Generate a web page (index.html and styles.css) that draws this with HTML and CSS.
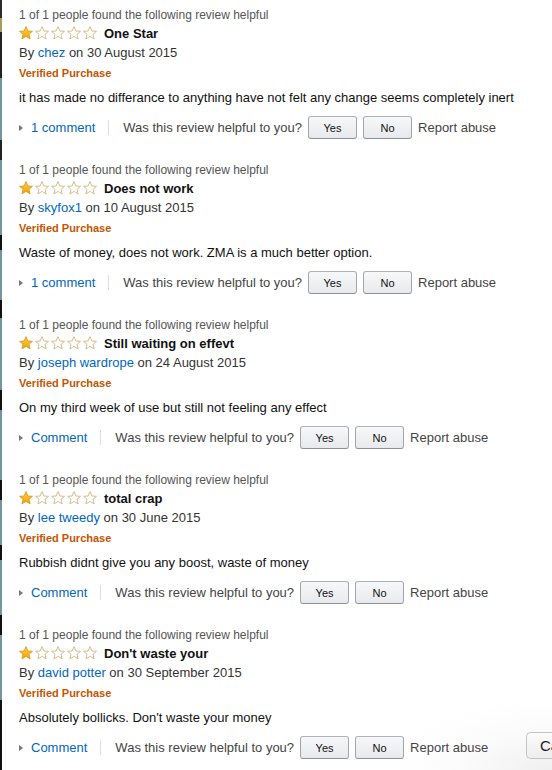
FILE: index.html
```html
<!DOCTYPE html>
<html>
<head>
<meta charset="utf-8">
<link rel="stylesheet" href="styles.css">
</head>
<body>
<div class="float-shade"></div>
<div class="page">
  <div class="edge"></div>
  <main class="reviews">

    <section class="review">
      <div class="helpful-count">1 of 1 people found the following review helpful</div>
      <div class="rating-row">
        <svg class="stars" width="79" height="14" viewBox="0 0 79 14">
          <defs>
            <linearGradient id="gold" x1="0" y1="0" x2="0" y2="1">
              <stop offset="0" stop-color="#ffce3d"/>
              <stop offset="1" stop-color="#f0a30a"/>
            </linearGradient>
            <path id="st" d="M7 0.6 L8.9 5 L13.5 5.3 L10 8.3 L11.1 12.9 L7 10.4 L2.9 12.9 L4 8.3 L0.5 5.3 L5.1 5 Z"/>
          </defs>
          <use href="#st" x="0" class="on"/>
          <use href="#st" x="16" class="off"/>
          <use href="#st" x="32" class="off"/>
          <use href="#st" x="48" class="off"/>
          <use href="#st" x="64" class="off"/>
        </svg>
        <span class="title">One Star</span>
      </div>
      <div class="byline">By <a class="link">chez</a> on 30 August 2015</div>
      <div class="verified">Verified Purchase</div>
      <p class="text">it has made no differance to anything have not felt any change seems completely inert</p>
      <div class="actions">
        <span class="toggle"></span><a class="link comments">1 comment</a><span class="sep"></span>
        <span class="ask">Was this review helpful to you?</span>
        <button class="btn">Yes</button><button class="btn">No</button>
        <span class="report">Report abuse</span>
      </div>
    </section>

    <section class="review">
      <div class="helpful-count">1 of 1 people found the following review helpful</div>
      <div class="rating-row">
        <svg class="stars" width="79" height="14" viewBox="0 0 79 14">
          <use href="#st" x="0" class="on"/>
          <use href="#st" x="16" class="off"/>
          <use href="#st" x="32" class="off"/>
          <use href="#st" x="48" class="off"/>
          <use href="#st" x="64" class="off"/>
        </svg>
        <span class="title">Does not work</span>
      </div>
      <div class="byline">By <a class="link">skyfox1</a> on 10 August 2015</div>
      <div class="verified">Verified Purchase</div>
      <p class="text">Waste of money, does not work. ZMA is a much better option.</p>
      <div class="actions">
        <span class="toggle"></span><a class="link comments">1 comment</a><span class="sep"></span>
        <span class="ask">Was this review helpful to you?</span>
        <button class="btn">Yes</button><button class="btn">No</button>
        <span class="report">Report abuse</span>
      </div>
    </section>

    <section class="review">
      <div class="helpful-count">1 of 1 people found the following review helpful</div>
      <div class="rating-row">
        <svg class="stars" width="79" height="14" viewBox="0 0 79 14">
          <use href="#st" x="0" class="on"/>
          <use href="#st" x="16" class="off"/>
          <use href="#st" x="32" class="off"/>
          <use href="#st" x="48" class="off"/>
          <use href="#st" x="64" class="off"/>
        </svg>
        <span class="title">Still waiting on effevt</span>
      </div>
      <div class="byline">By <a class="link">joseph wardrope</a> on 24 August 2015</div>
      <div class="verified">Verified Purchase</div>
      <p class="text">On my third week of use but still not feeling any effect</p>
      <div class="actions">
        <span class="toggle"></span><a class="link comments">Comment</a><span class="sep"></span>
        <span class="ask">Was this review helpful to you?</span>
        <button class="btn">Yes</button><button class="btn">No</button>
        <span class="report">Report abuse</span>
      </div>
    </section>

    <section class="review">
      <div class="helpful-count">1 of 1 people found the following review helpful</div>
      <div class="rating-row">
        <svg class="stars" width="79" height="14" viewBox="0 0 79 14">
          <use href="#st" x="0" class="on"/>
          <use href="#st" x="16" class="off"/>
          <use href="#st" x="32" class="off"/>
          <use href="#st" x="48" class="off"/>
          <use href="#st" x="64" class="off"/>
        </svg>
        <span class="title">total crap</span>
      </div>
      <div class="byline">By <a class="link">lee tweedy</a> on 30 June 2015</div>
      <div class="verified">Verified Purchase</div>
      <p class="text">Rubbish didnt give you any boost, waste of money</p>
      <div class="actions">
        <span class="toggle"></span><a class="link comments">Comment</a><span class="sep"></span>
        <span class="ask">Was this review helpful to you?</span>
        <button class="btn">Yes</button><button class="btn">No</button>
        <span class="report">Report abuse</span>
      </div>
    </section>

    <section class="review last">
      <div class="helpful-count">1 of 1 people found the following review helpful</div>
      <div class="rating-row">
        <svg class="stars" width="79" height="14" viewBox="0 0 79 14">
          <use href="#st" x="0" class="on"/>
          <use href="#st" x="16" class="off"/>
          <use href="#st" x="32" class="off"/>
          <use href="#st" x="48" class="off"/>
          <use href="#st" x="64" class="off"/>
        </svg>
        <span class="title">Don't waste your</span>
      </div>
      <div class="byline">By <a class="link">david potter</a> on 30 September 2015</div>
      <div class="verified">Verified Purchase</div>
      <p class="text">Absolutely bollicks. Don't waste your money</p>
      <div class="actions">
        <span class="toggle"></span><a class="link comments">Comment</a><span class="sep"></span>
        <span class="ask">Was this review helpful to you?</span>
        <button class="btn">Yes</button><button class="btn">No</button>
        <span class="report">Report abuse</span>
      </div>
    </section>

  </main>
</div>
<button class="float-btn">Ca</button>
</body>
</html>
```

FILE: styles.css
```css
html, body {
  margin: 0;
  padding: 0;
  height: 100%;
  overflow: hidden;
  background: #fff;
}
body {
  font-family: "Liberation Sans", Arial, sans-serif;
  color: #111;
  position: relative;
}
.page {
  display: flex;
  height: 100%;
  position: relative;
  z-index: 1;
}
.edge {
  width: 2px;
  flex: none;
  background: linear-gradient(to bottom,
    #2a2a2a 0, #2a2a2a 18px, #a89a5a 18px, #a89a5a 32px, #222 32px, #222 78px,
    #6f95a5 78px, #6f95a5 140px, #222 140px, #222 160px,
    #6f95a5 160px, #6f95a5 235px, #111 235px, #111 250px,
    #6f95a5 250px, #6f95a5 300px, #111 300px, #111 318px,
    #6f95a5 318px, #6f95a5 390px, #111 390px, #111 410px,
    #6f95a5 410px, #6f95a5 480px, #111 480px, #111 500px,
    #6f95a5 500px, #6f95a5 545px, #111 545px, #111 560px,
    #6f95a5 560px, #6f95a5 615px, #111 615px, #111 635px,
    #6f95a5 635px, #6f95a5 700px, #111 700px);
}
.reviews {
  flex: 1;
  padding: 6px 0 0 17px;
}
.review {
  height: 155px;
}
.review.last {
  height: auto;
}
.helpful-count {
  font-size: 12px;
  line-height: 18px;
  color: #555;
}
.rating-row {
  display: flex;
  align-items: center;
  height: 18px;
}
.stars {
  display: block;
  flex: none;
}
.stars .on {
  fill: url(#gold);
  stroke: #d6951c;
  stroke-width: 0.8;
}
.stars .off {
  fill: #fff;
  stroke: #d2b47e;
  stroke-width: 0.9;
}
.title {
  margin-left: 6px;
  font-size: 13px;
  font-weight: bold;
  color: #111;
}
.byline {
  font-size: 13px;
  line-height: 22px;
  color: #333;
}
.link {
  color: #0066c0;
  text-decoration: none;
}
.verified {
  font-size: 11px;
  font-weight: bold;
  line-height: 18px;
  color: #c45500;
}
.text {
  margin: 6px 0 0;
  font-size: 13px;
  line-height: 20px;
  color: #111;
}
.actions {
  display: flex;
  align-items: center;
  height: 23px;
  margin-top: 8px;
  font-size: 13px;
  color: #444;
}
.toggle {
  width: 0;
  height: 0;
  border-top: 3.5px solid transparent;
  border-bottom: 3.5px solid transparent;
  border-left: 4px solid #777;
  margin: 0 8px 0 0;
}
.comments {
  margin-right: 13px;
}
.sep {
  width: 1px;
  height: 15px;
  background: #ddd;
  margin-right: 14px;
}
.btn {
  width: 49px;
  height: 23px;
  margin-left: 6px;
  padding: 0;
  font-family: "Liberation Sans", Arial, sans-serif;
  font-size: 11px;
  color: #111;
  background: linear-gradient(to bottom, #f7f8fa, #e7e9ec);
  border: 1px solid #adb1b8;
  border-color: #adb1b8 #a2a6ac #8d9096;
  border-radius: 3px;
}
.report {
  margin-left: 6px;
}
.float-shade {
  position: absolute;
  left: 380px;
  top: 680px;
  width: 172px;
  height: 90px;
  z-index: 0;
  background: radial-gradient(ellipse 160px 70px at 100% 100%, rgba(238, 238, 238, 0.9), rgba(248, 248, 248, 0.5) 60%, rgba(255, 255, 255, 0) 100%);
  pointer-events: none;
}
.float-btn {
  position: absolute;
  right: -1px;
  top: 732px;
  z-index: 2;
  width: 27px;
  height: 27px;
  padding: 0 0 0 13px;
  text-align: left;
  overflow: hidden;
  white-space: nowrap;
  font-family: "Liberation Sans", Arial, sans-serif;
  font-size: 15px;
  color: #222;
  background: linear-gradient(to bottom, #fbfbfb, #eeeeee);
  border: 1px solid #c4c4c4;
  border-right: none;
  border-radius: 5px 0 0 5px;
}
```
